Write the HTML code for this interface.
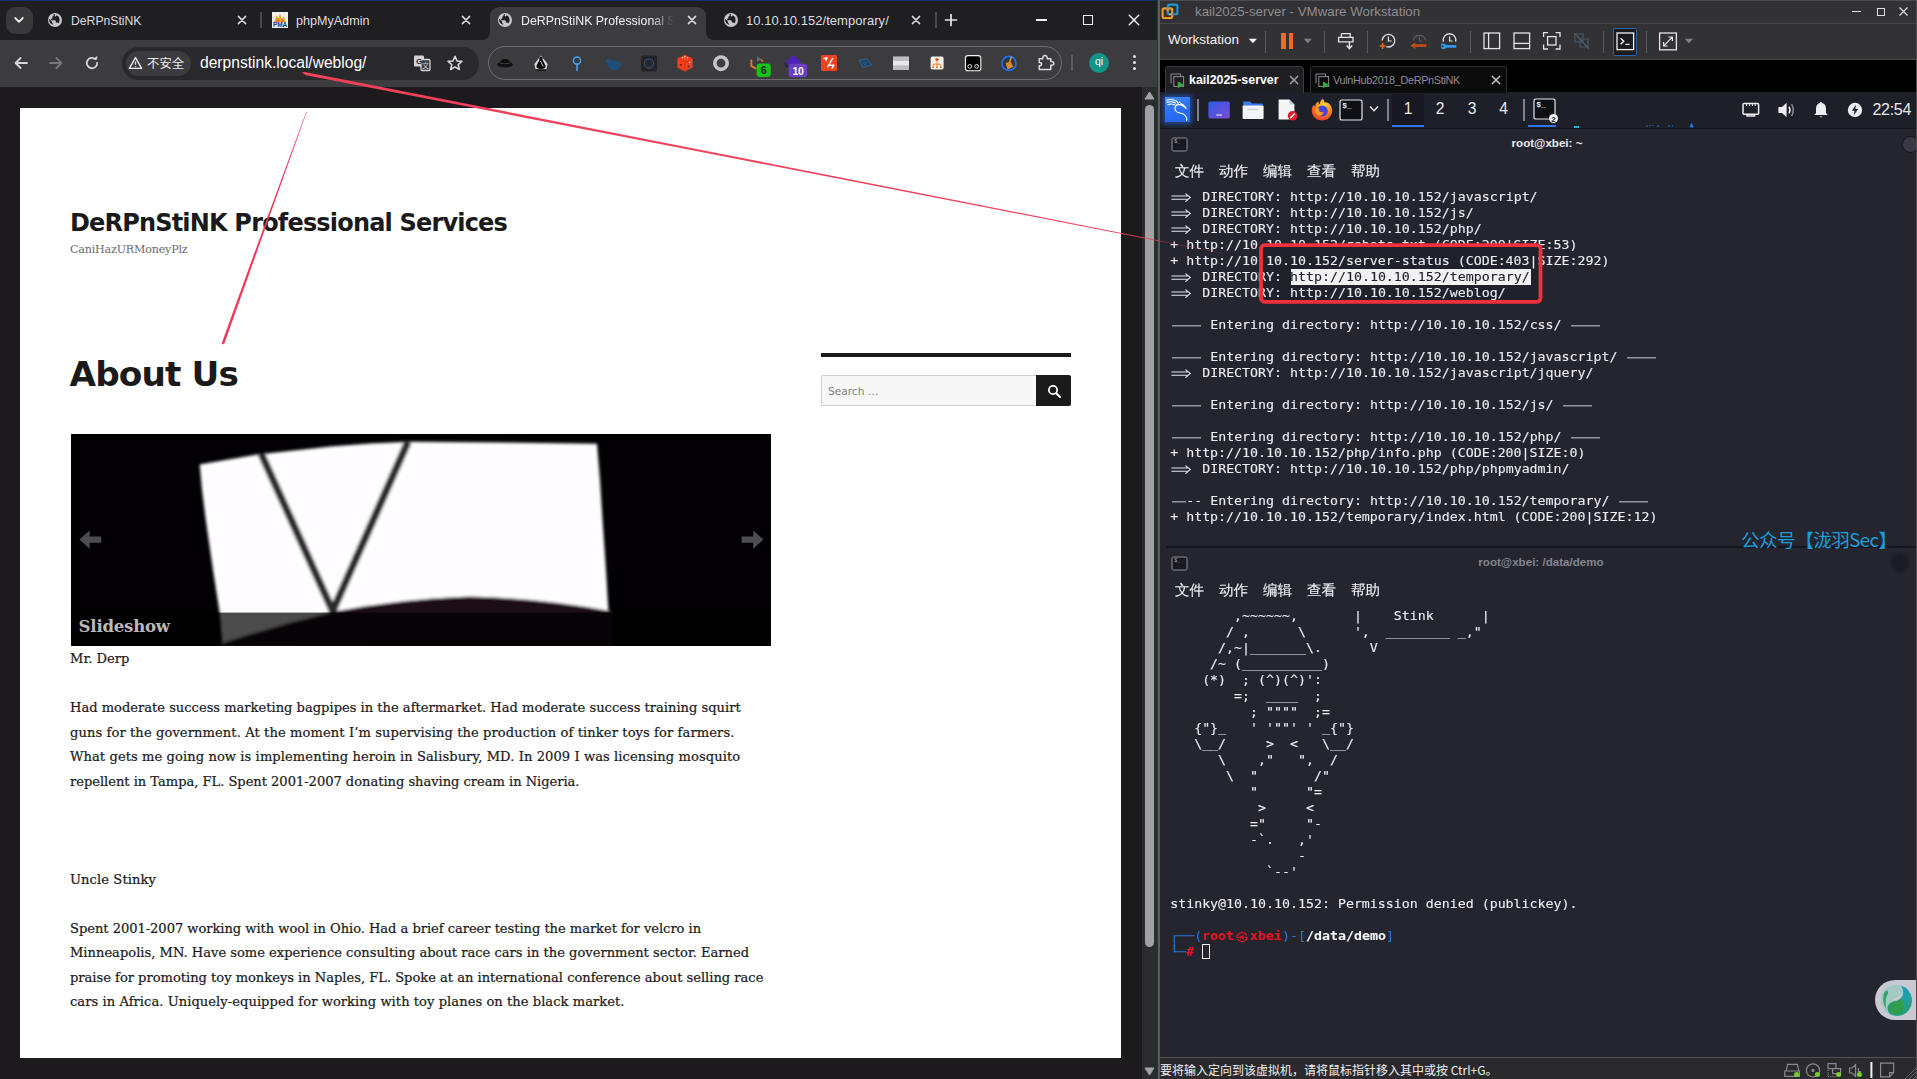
<!DOCTYPE html>
<html lang="zh">
<head>
<meta charset="utf-8">
<title>DeRPnStiNK Professional Services</title>
<style>
*{box-sizing:border-box;margin:0;padding:0}
html,body{width:1917px;height:1079px;overflow:hidden;background:#1c1a1d}
body{position:relative;font-family:"Liberation Sans","Noto Sans CJK SC",sans-serif;color:#e3e3e3}
.abs{position:absolute}
.nw{white-space:nowrap}
/* ---------- chrome ---------- */
#chrome{position:absolute;left:0;top:0;width:1158px;height:1079px;background:#1c1a1d;overflow:hidden}
#tabstrip{position:absolute;left:0;top:0;width:1158px;height:41px;background:#1f1e21;border-top:1px solid #12306b}
#toolbar{position:absolute;left:0;top:40px;width:1158px;height:47px;background:#3c3b3e}
.tabtxt{position:absolute;top:14px;font-size:12px;line-height:15px;color:#dedde0;white-space:nowrap}
.tabx{position:absolute;top:14px;width:12px;height:12px}
#omni{position:absolute;left:122px;top:47px;width:357px;height:33px;border-radius:17px;background:#29282b}
#chip{position:absolute;left:126px;top:51px;width:65px;height:25px;border-radius:13px;background:#3c3b3e}
#extpill{position:absolute;left:488px;top:46px;width:574px;height:34px;border-radius:17px;border:1px solid #6e6d70;background:#3c3b3e}
/* ---------- web page ---------- */
#page{position:absolute;left:20px;top:108px;width:1101px;height:950px;background:#fff;color:#1a1a1a}
.mont{font-family:"DejaVu Sans","Liberation Sans",sans-serif;font-weight:bold;color:#1a1a1a;white-space:nowrap}
.merri{font-family:"DejaVu Serif","Liberation Serif",serif;color:#1a1a1a;white-space:nowrap}
.bl{position:absolute;left:50px;font-size:13.05px;line-height:16px;height:16px;-webkit-text-stroke:0.22px #1a1a1a}
/* ---------- vmware ---------- */
#vm{position:absolute;left:1158px;top:0;width:759px;height:1079px;background:#252530;overflow:hidden}
.mono{font-family:"DejaVu Sans Mono","Liberation Mono",monospace;font-size:13.288px;line-height:16px;white-space:pre;color:#ededf1;-webkit-text-stroke:0.12px currentColor}
.tl{position:absolute;left:12.2px;height:16px;transform:scaleY(0.885);transform-origin:0 11.7px}
.menu{position:absolute;font-family:"WenQuanYi Zen Hei","Noto Sans CJK SC",sans-serif;font-size:14.5px;line-height:20px;color:#f0f0f4;white-space:nowrap;-webkit-text-stroke:0.12px #f0f0f4;margin-top:0.8px}
.lig{display:inline-block;vertical-align:top}
.dash4{display:inline-block;width:32px;height:16px;vertical-align:top;background:linear-gradient(#e6e6ea,#e6e6ea) 1.5px 7.6px/29px 1.2px no-repeat}
.dash1{display:inline-block;width:8px;height:16px;vertical-align:top;background:linear-gradient(#e6e6ea,#e6e6ea) 1.5px 7.6px/6.5px 1.2px no-repeat}
.dash2{display:inline-block;width:16px;height:16px;vertical-align:top;background:linear-gradient(#e6e6ea,#e6e6ea) 1.5px 7.6px/14.5px 1.2px no-repeat}
.sel{color:#1d1e27}
.kk{display:inline-block;width:16px;text-align:center;font-family:"Noto Sans CJK SC",sans-serif;font-weight:bold;font-size:12px;line-height:16px;vertical-align:top}
</style>
</head>
<body>
<!-- ================= CHROME WINDOW ================= -->
<div id="chrome">
 <div id="tabstrip"></div>
 <div id="toolbar"></div>
 <!-- tab search -->
 <div class="abs" style="left:6px;top:7px;width:27px;height:27px;border-radius:9px;background:#39383b"></div>
 <svg class="abs" style="left:13px;top:15px" width="12" height="10" viewBox="0 0 12 10"><path d="M2.2 3 L6 6.8 L9.8 3" fill="none" stroke="#f1f1f3" stroke-width="1.8" stroke-linecap="round" stroke-linejoin="round"/></svg>
 <!-- active tab -->
 <div class="abs" style="left:490px;top:7px;width:216px;height:34px;border-radius:9px 9px 0 0;background:#3c3b3e"></div>
 <svg class="abs" style="left:482px;top:32px" width="8" height="8"><path d="M8 0 V8 H0 A8 8 0 0 0 8 0Z" fill="#3c3b3e"/></svg>
 <svg class="abs" style="left:706px;top:32px" width="8" height="8"><path d="M0 0 V8 H8 A8 8 0 0 1 0 0Z" fill="#3c3b3e"/></svg>
 <!-- globes -->
 <svg class="abs globe" style="left:47px;top:12px" width="16" height="16" viewBox="0 0 16 16"><circle cx="8" cy="8" r="7" fill="#c9c8cc"/><path d="M6.6 2.2 L6.6 3.6 Q6.6 4.6 5.4 4.6 L5.4 6 Q5.4 6.8 4.2 6.8 L4.2 8.2 L7.6 8.2 Q8.8 8.2 8.8 9.4 L8.8 10.4 L10 10.4 Q11 10.4 11.3 11.6 Q12.6 10.2 12.6 8 Q12.6 4.6 9.6 3.3 Q9.4 4.4 8.4 4.4 L7.8 4.4 L7.8 2.1 Z M2.4 6.8 Q2.2 7.4 2.2 8 Q2.2 11.6 6.2 12.7 L6.2 11.6 Q5 11.6 5 10.4 L5 9.6 Z" fill="#1f1e21"/></svg>
 <svg class="abs globe" style="left:497px;top:12px" width="16" height="16" viewBox="0 0 16 16"><circle cx="8" cy="8" r="7" fill="#c9c8cc"/><path d="M6.6 2.2 L6.6 3.6 Q6.6 4.6 5.4 4.6 L5.4 6 Q5.4 6.8 4.2 6.8 L4.2 8.2 L7.6 8.2 Q8.8 8.2 8.8 9.4 L8.8 10.4 L10 10.4 Q11 10.4 11.3 11.6 Q12.6 10.2 12.6 8 Q12.6 4.6 9.6 3.3 Q9.4 4.4 8.4 4.4 L7.8 4.4 L7.8 2.1 Z M2.4 6.8 Q2.2 7.4 2.2 8 Q2.2 11.6 6.2 12.7 L6.2 11.6 Q5 11.6 5 10.4 L5 9.6 Z" fill="#1f1e21"/></svg>
 <svg class="abs globe" style="left:723px;top:12px" width="16" height="16" viewBox="0 0 16 16"><circle cx="8" cy="8" r="7" fill="#c9c8cc"/><path d="M6.6 2.2 L6.6 3.6 Q6.6 4.6 5.4 4.6 L5.4 6 Q5.4 6.8 4.2 6.8 L4.2 8.2 L7.6 8.2 Q8.8 8.2 8.8 9.4 L8.8 10.4 L10 10.4 Q11 10.4 11.3 11.6 Q12.6 10.2 12.6 8 Q12.6 4.6 9.6 3.3 Q9.4 4.4 8.4 4.4 L7.8 4.4 L7.8 2.1 Z M2.4 6.8 Q2.2 7.4 2.2 8 Q2.2 11.6 6.2 12.7 L6.2 11.6 Q5 11.6 5 10.4 L5 9.6 Z" fill="#1f1e21"/></svg>
 <!-- tab texts -->
 <div class="tabtxt" style="left:71px;font-size:12.2px">DeRPnStiNK</div>
 <div class="tabtxt" style="left:296px;font-size:12.6px">phpMyAdmin</div>
 <div class="tabtxt" style="left:521px;width:153px;overflow:hidden;color:#f0f0f2;font-size:12.37px;-webkit-mask-image:linear-gradient(90deg,#000 85%,transparent 100%);mask-image:linear-gradient(90deg,#000 85%,transparent 100%)">DeRPnStiNK Professional Services</div>
 <div class="tabtxt" style="left:746px;top:13.4px;font-size:13px;letter-spacing:0.05px">10.10.10.152/temporary/</div>
 <!-- PMA icon -->
 <div class="abs" style="left:272px;top:12px;width:16px;height:16px;background:#f4f1ea"></div>
 <svg class="abs" style="left:272px;top:12px" width="16" height="16" viewBox="0 0 16 16"><path d="M2 10 L5 3 L6.5 7 L8 1.5 L10 7.5 L11.5 4 L14 10 Z" fill="#f0a22e"/><path d="M4 10 L6 6 L8 10Z M9 10 L10.5 6.5 L12.5 10Z" fill="#d77b12"/></svg>
 <div class="abs nw" style="left:272px;top:21px;width:16px;text-align:center;font-size:6.5px;font-weight:bold;color:#2b2f8c;line-height:7px;letter-spacing:-0.2px">PMA</div>
 <!-- tab close X -->
 <svg class="tabx" style="left:235.7px"><path d="M2.4 2.4 L9.6 9.6 M9.6 2.4 L2.4 9.6" stroke="#dddce0" stroke-width="1.5" stroke-linecap="round"/></svg>
 <svg class="tabx" style="left:460px"><path d="M2.4 2.4 L9.6 9.6 M9.6 2.4 L2.4 9.6" stroke="#dddce0" stroke-width="1.5" stroke-linecap="round"/></svg>
 <svg class="tabx" style="left:685.7px"><path d="M2.4 2.4 L9.6 9.6 M9.6 2.4 L2.4 9.6" stroke="#dddce0" stroke-width="1.5" stroke-linecap="round"/></svg>
 <svg class="tabx" style="left:909.5px"><path d="M2.4 2.4 L9.6 9.6 M9.6 2.4 L2.4 9.6" stroke="#dddce0" stroke-width="1.5" stroke-linecap="round"/></svg>
 <!-- separators -->
 <div class="abs" style="left:260px;top:12px;width:2px;height:16px;background:#4a494c"></div>
 <div class="abs" style="left:935px;top:12px;width:2px;height:16px;background:#4a494c"></div>
 <!-- new tab + -->
 <svg class="abs" style="left:944px;top:13px" width="14" height="14"><path d="M7 1.5 V12.5 M1.5 7 H12.5" stroke="#e6e5e8" stroke-width="1.7" stroke-linecap="round"/></svg>
 <!-- window controls -->
 <div class="abs" style="left:1036px;top:19px;width:11px;height:1.5px;background:#f0f0f2"></div>
 <div class="abs" style="left:1083px;top:15px;width:10px;height:10px;border:1.5px solid #f0f0f2"></div>
 <svg class="abs" style="left:1128px;top:14px" width="12" height="12"><path d="M0.8 0.8 L11.2 11.2 M11.2 0.8 L0.8 11.2" stroke="#f0f0f2" stroke-width="1.5"/></svg>
 <!-- nav buttons -->
 <svg class="abs" style="left:13px;top:55px" width="16" height="16" viewBox="0 0 16 16"><path d="M14 8 H3 M7.6 3 L2.6 8 L7.6 13" fill="none" stroke="#d6d5d9" stroke-width="1.8" stroke-linecap="round" stroke-linejoin="round"/></svg>
 <svg class="abs" style="left:48px;top:55px" width="16" height="16" viewBox="0 0 16 16"><path d="M2 8 H13 M8.4 3 L13.4 8 L8.4 13" fill="none" stroke="#77767a" stroke-width="1.8" stroke-linecap="round" stroke-linejoin="round"/></svg>
 <svg class="abs" style="left:84px;top:55px" width="16" height="16" viewBox="0 0 16 16"><path d="M13.2 8 A5.2 5.2 0 1 1 11.4 4.1" fill="none" stroke="#d6d5d9" stroke-width="1.8" stroke-linecap="round"/><path d="M9 4.6 H13.2 V0.8 Z" fill="#d6d5d9"/></svg>
 <!-- omnibox -->
 <div id="omni"></div>
 <div id="chip"></div>
 <svg class="abs" style="left:128px;top:56px" width="15" height="14" viewBox="0 0 15 14"><path d="M7.5 1.6 L13.6 12.4 H1.4 Z" fill="none" stroke="#e6e5e8" stroke-width="1.4" stroke-linejoin="round"/><path d="M7.5 5.4 V8.8 M7.5 10.2 V11.2" stroke="#e6e5e8" stroke-width="1.3"/></svg>
 <div class="abs nw" style="left:147px;top:54px;font-size:12.4px;line-height:18px;color:#ececef;font-family:'Noto Sans CJK SC','Liberation Sans',sans-serif">不安全</div>
 <div class="abs nw" id="url" style="left:200px;top:53px;font-size:15.6px;line-height:20px;color:#fff">derpnstink.local/weblog/</div>
 <!-- translate icon -->
 <svg class="abs" style="left:413px;top:54px" width="18" height="18" viewBox="0 0 18 18"><rect x="1" y="1.5" width="10" height="11" rx="1.2" fill="#d2d1d5"/><rect x="8" y="5.5" width="9" height="11" rx="1.2" fill="#3c3b3e" stroke="#d2d1d5" stroke-width="1.3"/><text x="6" y="10" font-size="8" font-weight="bold" fill="#29282b" text-anchor="middle" font-family="Liberation Sans, sans-serif">G</text><text x="12.5" y="14.2" font-size="7" fill="#d2d1d5" text-anchor="middle" font-family="Noto Sans CJK SC, sans-serif">文</text></svg>
 <!-- star -->
 <svg class="abs" style="left:446px;top:54px" width="18" height="18" viewBox="0 0 18 18"><path d="M9 2.2 L11 6.9 L16 7.3 L12.2 10.6 L13.4 15.5 L9 12.9 L4.6 15.5 L5.8 10.6 L2 7.3 L7 6.9 Z" fill="none" stroke="#dcdbdf" stroke-width="1.5" stroke-linejoin="round"/></svg>
 <!-- extensions pill -->
 <div id="extpill"></div>
 <svg class="abs" style="left:488px;top:44px" width="580" height="40" viewBox="488 44 580 40">
  <!-- hat -->
  <ellipse cx="505" cy="64.5" rx="7.6" ry="2.6" fill="#111" stroke="#0a0a0a" stroke-width="0.6"/><path d="M499.6 63.8 Q500.6 58.6 505 59 Q509.6 58.6 510.4 63.8 Q505 65.6 499.6 63.8Z" fill="#0d0d0d"/><path d="M499.8 63 Q505 64.6 510.2 63" stroke="#555" stroke-width="0.7" fill="none"/>
  <!-- chess/flask -->
  <path d="M541 55.5 L547.6 64 L546.4 69.6 H535.6 L534.4 64 Z" fill="#d8d8da"/><path d="M541 56.4 Q543.4 57.4 542.4 59.6 L545.6 66 Q546 69 541 69 Q536 69 536.4 66 L539.6 59.6 Q538.6 57.4 541 56.4Z" fill="#0b0b0c"/><path d="M540.4 61 L543.2 66.4" stroke="#d8d8da" stroke-width="0.9"/><rect x="535.6" y="69.4" width="10.8" height="1.3" fill="#0b0b0c"/>
  <!-- blue pin -->
  <circle cx="577" cy="60.6" r="3.6" fill="none" stroke="#4aa3f0" stroke-width="1.5"/><path d="M577 64.2 V70.4" stroke="#4aa3f0" stroke-width="1.5" stroke-linecap="round"/>
  <!-- blue blob -->
  <path d="M605.6 60.4 Q606.6 57.6 609.6 59.2 L611.4 60.6 Q617.4 59.4 620.4 62.6 Q621.8 66 618.4 69.2 Q614 71 610.4 69 Q607.6 67.2 608 63.6 Q605.2 62.6 605.6 60.4Z" fill="#1f4f78"/>
  <!-- dark square -->
  <rect x="641" y="55.4" width="16" height="16" rx="1.5" fill="#232225"/><circle cx="649" cy="63.4" r="4.6" fill="none" stroke="#33506b" stroke-width="1.3"/><circle cx="649" cy="63.4" r="2.6" fill="none" stroke="#2a3a4a" stroke-width="0.8"/>
  <!-- red dice -->
  <path d="M685 54.8 L692.6 58.4 V67.6 L685 71.4 L677.4 67.6 V58.4 Z" fill="#f4411f"/><path d="M677.4 58.4 L685 62 L692.6 58.4 M685 62 V71.4" stroke="#c9300f" stroke-width="0.7" fill="none"/><circle cx="681" cy="65" r="1" fill="#7a1a06"/><circle cx="688.6" cy="66.6" r="1" fill="#3a2a55"/><circle cx="682.6" cy="57.8" r="0.7" fill="#ffd9cf"/><circle cx="685" cy="56.8" r="0.7" fill="#ffd9cf"/><circle cx="687.4" cy="57.8" r="0.7" fill="#ffd9cf"/><circle cx="689.6" cy="62.4" r="0.8" fill="#ffd9cf"/>
  <!-- grey ring -->
  <circle cx="721" cy="63.2" r="6.2" fill="none" stroke="#c4c3c6" stroke-width="3.6"/>
  <!-- orange + badge 6 -->
  <path d="M751.4 60.4 V66 L755.6 68.6" fill="none" stroke="#f07a1c" stroke-width="1.8" stroke-linecap="round" stroke-linejoin="round"/><path d="M757 56.2 L761.6 59.6 L757 61.4Z" fill="#6b6a6d"/><path d="M761.2 59.6 L763 61.4" stroke="#f07a1c" stroke-width="1.4"/>
  <rect x="756.6" y="63.4" width="14.2" height="13.6" rx="3.2" fill="#14c414"/><text x="763.7" y="74.4" font-size="10.5" font-weight="bold" fill="#0a1a0a" text-anchor="middle" font-family="Liberation Sans, sans-serif">6</text>
  <!-- purple hat + badge 10 -->
  <path d="M785.4 62 L793.4 55.2 L801.4 62 L797.8 64.2 H789 Z" fill="#4d22b8"/><path d="M785.4 63.2 L786.6 66.8 L789 66" stroke="#26126b" stroke-width="1.2" fill="none"/>
  <rect x="788.6" y="63.8" width="18.6" height="13.4" rx="3.2" fill="#6a3fc2"/><text x="797.9" y="74.6" font-size="10.5" font-weight="bold" fill="#fff" text-anchor="middle" font-family="Liberation Sans, sans-serif" letter-spacing="-0.4">10</text>
  <!-- red square -->
  <rect x="821" y="55" width="16" height="16" rx="1.6" fill="#f4411f"/><path d="M824 58.6 L827 57.6 L826 60.6 M832.6 58.4 L827.6 67 M829.8 65.2 L834 65.2 L832 68" stroke="#fff" stroke-width="1.4" fill="none" stroke-linecap="round" stroke-linejoin="round"/>
  <!-- blue diamond -->
  <path d="M858.8 60.6 L866.6 58.8 L871.8 64.6 L863.2 67.6 Z" fill="#1f4564" stroke="#2f6a98" stroke-width="0.9"/><circle cx="865" cy="63.2" r="1.4" fill="none" stroke="#2f6a98" stroke-width="0.6"/>
  <!-- grey bars -->
  <rect x="893" y="56.4" width="16" height="13.6" fill="#bdbcbf"/><rect x="893" y="61" width="16" height="4.4" fill="#e9e9eb"/>
  <!-- white square orange -->
  <rect x="930.6" y="56.6" width="13" height="13" rx="1.8" fill="#f7f3ee"/><circle cx="937" cy="59.6" r="1.7" fill="#f0532a"/><path d="M937 61.4 V64 M933.2 66.6 V64.2 H940.8 V66.6 M937 64.2 V66.6" stroke="#f07a1c" stroke-width="0.9" fill="none"/><circle cx="933.2" cy="67.2" r="1" fill="#f07a1c"/><circle cx="937" cy="67.2" r="1" fill="#f07a1c"/><circle cx="940.8" cy="67.2" r="1" fill="#f07a1c"/>
  <!-- black square eyes -->
  <rect x="965.4" y="55.6" width="15.4" height="15.2" rx="2.6" fill="#000" stroke="#f4f4f6" stroke-width="1.1"/><circle cx="969.8" cy="66.4" r="1.9" fill="none" stroke="#f4f4f6" stroke-width="0.9"/><circle cx="976.6" cy="66.4" r="1.9" fill="none" stroke="#f4f4f6" stroke-width="0.9"/>
  <!-- blue ring broom -->
  <circle cx="1009" cy="63.4" r="7" fill="#3a342e" stroke="#1c70ee" stroke-width="1.7"/><path d="M1011.6 56.6 L1009.6 62" stroke="#e39a4c" stroke-width="1.3"/><path d="M1005.6 63 L1010.6 61.4 L1013.4 66.8 L1007.6 69.4 Z" fill="#d8873a"/>
  <!-- puzzle -->
  <path d="M1039.2 58.8 H1042.8 Q1042.6 55.6 1045 55.6 Q1047.4 55.6 1047.2 58.8 H1050.8 V61.6 Q1053.8 61.2 1053.8 63.4 Q1053.8 65.6 1050.8 65.2 V69.4 H1039.2 V65.8 Q1041.6 65.8 1041.6 64 Q1041.6 62.4 1039.2 62.4 Z" fill="none" stroke="#dcdbdf" stroke-width="1.5" stroke-linejoin="round"/>
 </svg>
 <div class="abs" style="left:1071px;top:55px;width:2px;height:16px;background:#5b5a5d"></div>
 <div class="abs" style="left:1089px;top:53px;width:20px;height:20px;border-radius:10px;background:#12948a"></div>
 <div class="abs nw" style="left:1089px;top:55px;width:20px;text-align:center;font-size:10.5px;line-height:13px;color:#fff">qi</div>
 <div class="abs" style="left:1132.5px;top:55px;width:3px;height:3px;border-radius:2px;background:#e6e5e8;box-shadow:0 6px 0 #e6e5e8,0 12px 0 #e6e5e8"></div>
 <!-- scrollbar -->
 <div class="abs" style="left:1142px;top:87px;width:15px;height:992px;background:#2c2b2e"></div>
 <div class="abs" style="left:1145px;top:105px;width:9px;height:842px;border-radius:5px;background:#a1a0a3"></div>
 <svg class="abs" style="left:1144px;top:91px" width="11" height="9"><path d="M5.5 1 L10 8 H1 Z" fill="#a1a0a3" stroke="#a1a0a3" stroke-width="1" stroke-linejoin="round"/></svg>
 <svg class="abs" style="left:1144px;top:1067px" width="11" height="9"><path d="M5.5 8 L10 1 H1 Z" fill="#a1a0a3" stroke="#a1a0a3" stroke-width="1" stroke-linejoin="round"/></svg>
 <div class="abs" style="left:1157px;top:0;width:1px;height:1079px;background:#16346f"></div>
 <!--CHROME_UI_END-->
 <div id="page">
  <div class="abs mont" id="sitetitle" style="left:50px;top:99.5px;font-size:24px;line-height:30px;letter-spacing:-0.82px">DeRPnStiNK Professional Services</div>
  <div class="abs merri" id="tagline" style="left:50px;top:134.6px;font-size:11.1px;letter-spacing:-0.18px;line-height:14px;color:#686868">CaniHazURMoneyPlz</div>
  <div class="abs mont" id="abouth" style="left:49.5px;top:245px;font-size:34.3px;line-height:42px;letter-spacing:-0.9px">About Us</div>
  <!-- slideshow -->
  <div class="abs" style="left:50.6px;top:326px;width:700px;height:212px;background:#020002;overflow:hidden">
   <svg class="abs" style="left:0;top:0" width="700" height="212" viewBox="70 434 700 212">
    <defs><filter id="bl" x="-5%" y="-5%" width="110%" height="110%"><feGaussianBlur stdDeviation="1.7"/></filter></defs>
    <g filter="url(#bl)">
     <path d="M198.7 464.5 L256.3 454.5 L330 446.5 L369.4 443.6 L409 441.8 L500 442.6 L596 443.8 L599 480 L601.5 519.2 L605 570 L607.5 612 L607.5 650 L222 650 L218.6 612.5 L212 570 L204.7 519.2 L201 490 Z" fill="#fffdff"/>
     <path d="M260.2 453.7 L331.7 611 L407 441.8" fill="none" stroke="#2b2a2c" stroke-width="7.6" stroke-linejoin="miter"/>
     <path d="M206 648 Q270 626 333 611.5 Q400 598.5 468 596.4 Q540 598 612 611.5 L612 650 Z" fill="#1c0f12"/>
    </g>
    <rect x="70" y="612.6" width="700" height="34" fill="#000" fill-opacity="0.7"/>
    <path d="M78.4 539.6 L88.6 530.4 V536.4 H100.2 V542.8 H88.6 V548.8 Z" fill="#4e4d4f"/>
    <path d="M762.4 539.6 L752.2 530.4 V536.4 H740.6 V542.8 H752.2 V548.8 Z" fill="#4e4d4f"/>
   </svg>
   <div class="abs nw" style="left:8px;top:182px;font-family:'DejaVu Serif','Liberation Serif',serif;font-weight:bold;font-size:16.6px;line-height:20px;color:#b9b9b9;letter-spacing:-0.25px">Slideshow</div>
  </div>
  <!-- body text -->
  <div class="bl merri" style="top:543.4px;letter-spacing:0.033px">Mr. Derp</div>
  <div class="bl merri" style="top:592.4px;letter-spacing:0.007px">Had moderate success marketing bagpipes in the aftermarket. Had moderate success training squirt</div>
  <div class="bl merri" style="top:616.9px;letter-spacing:0.106px">guns for the government. At the moment I’m supervising the production of tinker toys for farmers.</div>
  <div class="bl merri" style="top:641.4px;letter-spacing:0.091px">What gets me going now is implementing heroin in Salisbury, MD. In 2009 I was licensing mosquito</div>
  <div class="bl merri" style="top:665.9px;letter-spacing:-0.02px">repellent in Tampa, FL. Spent 2001-2007 donating shaving cream in Nigeria.</div>
  <div class="bl merri" style="top:763.9px;letter-spacing:0.102px">Uncle Stinky</div>
  <div class="bl merri" style="top:812.9px;letter-spacing:-0.029px">Spent 2001-2007 working with wool in Ohio. Had a brief career testing the market for velcro in</div>
  <div class="bl merri" style="top:837.4px;letter-spacing:0.012px">Minneapolis, MN. Have some experience consulting about race cars in the government sector. Earned</div>
  <div class="bl merri" style="top:861.9px;letter-spacing:-0.005px">praise for promoting toy monkeys in Naples, FL. Spoke at an international conference about selling race</div>
  <div class="bl merri" style="top:886.4px;letter-spacing:0.061px">cars in Africa. Uniquely-equipped for working with toy planes on the black market.</div>
  <!-- sidebar -->
  <div class="abs" style="left:801px;top:245px;width:250px;height:4px;background:#1a1a1a"></div>
  <div class="abs" style="left:801px;top:266.5px;width:216px;height:31px;background:#f7f7f7;border:1px solid #d1d1d1;border-right:0;border-radius:2px 0 0 2px"></div>
  <div class="abs nw" style="left:808px;top:276px;font-family:'DejaVu Sans','Liberation Sans',sans-serif;font-size:10.6px;line-height:14px;color:#7d7d7d">Search …</div>
  <div class="abs" style="left:1016px;top:266.5px;width:35px;height:31px;background:#1a1a1a;border-radius:0 2px 2px 0"></div>
  <svg class="abs" style="left:1025.5px;top:274.5px" width="17" height="17" viewBox="0 0 16 16"><circle cx="6.6" cy="6.6" r="3.9" fill="none" stroke="#fff" stroke-width="1.7"/><path d="M9.6 9.6 L13.2 13.2" stroke="#fff" stroke-width="1.9" stroke-linecap="round"/></svg>
 </div>
 <!--PAGE_END-->
</div>
<!-- ================= VMWARE WINDOW ================= -->
<div id="vm">
 <!--VM1-->
 <div class="abs" style="left:0;top:0;width:759px;height:24px;background:#323134;border-top:1px solid #4c4b4f"></div>
 <div class="abs" style="left:0;top:23px;width:759px;height:1px;background:#48474a"></div>
 <div class="abs" style="left:0;top:24px;width:759px;height:36px;background:#323134"></div>
 <div class="abs" style="left:0;top:59px;width:759px;height:1px;background:#4a494c"></div>
 <div class="abs" style="left:0;top:60px;width:759px;height:32px;background:#000"></div>
 <div class="abs" style="left:0;top:92px;width:759px;height:36px;background:#1e2029"></div>
 <svg class="abs" style="left:3px;top:3px" width="18" height="18" viewBox="0 0 18 18"><rect x="1.6" y="5.4" width="9.6" height="9.6" rx="1.8" fill="none" stroke="#f39a1e" stroke-width="2.1"/><rect x="6.8" y="1.6" width="9.6" height="9.6" rx="1.8" fill="none" stroke="#1d97d4" stroke-width="2.1"/><path d="M6.8 5.4 V8.6 M11.2 11.2 H8" stroke="#f39a1e" stroke-width="2.1" fill="none"/></svg>
 <div class="abs nw" style="left:37px;top:3px;font-size:13.3px;line-height:17px;color:#8e8d92">kail2025-server - VMware Workstation</div>
 <div class="abs" style="left:694px;top:11px;width:9px;height:1px;background:#e0e0e3"></div>
 <div class="abs" style="left:719px;top:8px;width:8px;height:8px;border:1.3px solid #e0e0e3"></div>
 <svg class="abs" style="left:741px;top:7px" width="9" height="9"><path d="M0.5 0.5 L8.5 8.5 M8.5 0.5 L0.5 8.5" stroke="#e0e0e3" stroke-width="1.2"/></svg>
 <div class="abs nw" style="left:10px;top:31px;font-size:13.5px;line-height:17px;color:#f2f2f4">Workstation</div>
 <svg class="abs" style="left:90px;top:38px" width="10" height="6"><path d="M0.8 0.8 H9 L4.9 5.2Z" fill="#f2f2f4"/></svg>
 <div class="abs" style="left:107px;top:31px;width:1px;height:22px;background:#58575a"></div>
 <div class="abs" style="left:123px;top:33px;width:4.6px;height:16px;background:#f26a1b"></div>
 <div class="abs" style="left:130.5999999999999px;top:33px;width:4.6px;height:16px;background:#f26a1b"></div>
 <svg class="abs" style="left:145px;top:38px" width="10" height="6"><path d="M0.8 0.8 H9 L4.9 5.2Z" fill="#808084"/></svg>
 <div class="abs" style="left:166px;top:31px;width:1px;height:22px;background:#58575a"></div>
 <svg class="abs" style="left:178px;top:31px" width="20" height="20" viewBox="0 0 20 20"><path d="M5.4 2.6 H14.2 V6.4 M5.4 2.6 V6.4 M2.6 6.4 H17 V10.8 H2.6 Z" fill="none" stroke="#e4e4e7" stroke-width="1.3"/><path d="M13.4 10.8 V17 M10.6 14.6 L13.4 17.6 L16.2 14.6" fill="none" stroke="#e4e4e7" stroke-width="1.4"/></svg>
 <div class="abs" style="left:209px;top:31px;width:1px;height:22px;background:#58575a"></div>
 <svg class="abs" style="left:220px;top:31px" width="20" height="20" viewBox="0 0 20 20"><path d="M4.2 9.6 A6.3 6.3 0 1 1 8.4 15.6" fill="none" stroke="#e4e4e7" stroke-width="1.3"/><path d="M10.4 5.6 V10 H13.6" fill="none" stroke="#e4e4e7" stroke-width="1.2"/><path d="M4.6 12 V18 M1.6 15 H7.6" stroke="#f26a1b" stroke-width="1.5"/></svg>
 <svg class="abs" style="left:251px;top:31px" width="20" height="20" viewBox="0 0 20 20"><path d="M4.2 9.6 A6.3 6.3 0 0 1 16.6 9.6" fill="none" stroke="#5e5d61" stroke-width="1.2"/><path d="M10.4 5.6 V10 H13.2" fill="none" stroke="#5e5d61" stroke-width="1.1"/><path d="M6 14.6 H17.4" stroke="#c24a18" stroke-width="2.6"/><path d="M1.4 14.6 L6.4 11.2 V18Z" fill="#c24a18"/></svg>
 <svg class="abs" style="left:281px;top:31px" width="20" height="20" viewBox="0 0 20 20"><path d="M4.4 10.6 A6.3 6.3 0 1 1 16.6 10.6" fill="none" stroke="#e4e4e7" stroke-width="1.3"/><path d="M10.6 5.6 V10 H13.6" fill="none" stroke="#e4e4e7" stroke-width="1.2"/><path d="M6.4 15.4 H17.4" stroke="#2e9af0" stroke-width="2.6"/><path d="M2 12.6 Q2 17.6 6.4 17.4 L6.4 13.4 Q4 14.4 3.6 12.6Z" fill="#2e9af0"/><circle cx="4.6" cy="15.4" r="2.6" fill="#2e9af0"/><circle cx="3.6" cy="15.2" r="1" fill="#323134"/></svg>
 <div class="abs" style="left:312px;top:31px;width:1px;height:22px;background:#58575a"></div>
 <svg class="abs" style="left:324px;top:31px" width="20" height="20" viewBox="0 0 20 20"><rect x="2" y="2" width="15.6" height="15.6" fill="none" stroke="#e4e4e7" stroke-width="1.3"/><path d="M6.6 2 V17.6" stroke="#e4e4e7" stroke-width="1.3"/></svg>
 <svg class="abs" style="left:354px;top:31px" width="20" height="20" viewBox="0 0 20 20"><rect x="2" y="2" width="15.6" height="15.6" fill="none" stroke="#e4e4e7" stroke-width="1.3"/><path d="M2 12.4 H17.6" stroke="#e4e4e7" stroke-width="1.3"/></svg>
 <svg class="abs" style="left:384px;top:31px" width="20" height="20" viewBox="0 0 20 20"><path d="M1.6 6 V1.6 H6 M13.6 1.6 H18 V6 M18 13.6 V18 H13.6 M6 18 H1.6 V13.6" fill="none" stroke="#e4e4e7" stroke-width="1.3"/><rect x="5.6" y="5.6" width="8.4" height="8.4" fill="none" stroke="#e4e4e7" stroke-width="1.3"/></svg>
 <svg class="abs" style="left:414px;top:31px" width="20" height="20" viewBox="0 0 20 20"><path d="M3 3 H11 V11 H3Z M8 8 H16 V16 H8Z" fill="none" stroke="#3d5a6e" stroke-width="1.2"/><path d="M2.4 2 L17 18" stroke="#5a595d" stroke-width="1.2"/></svg>
 <div class="abs" style="left:445px;top:31px;width:1px;height:22px;background:#58575a"></div>
 <div class="abs" style="left:455px;top:28px;width:24.4px;height:27.6px;background:#1b1b1e;border:1px solid #2f62ad;border-radius:2px"></div>
 <svg class="abs" style="left:457px;top:31px" width="20" height="20" viewBox="0 0 20 20"><rect x="2" y="2" width="16.6" height="16.6" fill="none" stroke="#f0f0f3" stroke-width="1.3"/><path d="M5.6 7.2 L8.8 10.2 L5.6 13.2 M10.4 13.4 H14.6" fill="none" stroke="#f0f0f3" stroke-width="1.4"/></svg>
 <div class="abs" style="left:488px;top:31px;width:1px;height:22px;background:#58575a"></div>
 <svg class="abs" style="left:500px;top:31px" width="20" height="20" viewBox="0 0 20 20"><rect x="1.6" y="2" width="16.8" height="16.8" fill="none" stroke="#e4e4e7" stroke-width="1.3"/><path d="M6 14.6 L14 6.4 M10.4 6 H14.4 V10 M9.6 15 H5.6 V11" fill="none" stroke="#e4e4e7" stroke-width="1.2"/></svg>
 <svg class="abs" style="left:526px;top:38px" width="10" height="6"><path d="M0.8 0.8 H9 L4.9 5.2Z" fill="#808084"/></svg>
 <div class="abs" style="left:7px;top:66px;width:139px;height:27px;background:#1f1f23;border:1px solid #3b3a3e;border-bottom:0;border-radius:4px 4px 0 0"></div>
 <div class="abs" style="left:151.5px;top:66px;width:197px;height:27px;background:#0b0b0c;border:1px solid #2e2d30;border-bottom:0;border-radius:4px 4px 0 0"></div>
 <svg class="abs" style="left:11.5px;top:72.8px" width="17" height="16" viewBox="0 0 17 16"><path d="M1 10.4 V1 H10.6 V3.2" fill="none" stroke="#8d8c91" stroke-width="1"/><rect x="3.8" y="3.6" width="9.8" height="9.8" fill="none" stroke="#8d8c91" stroke-width="1"/><path d="M7.8 8.4 L14.4 11.8 L7.8 15.2Z" fill="#2fae3f"/></svg>
 <svg class="abs" style="left:156.5px;top:72.8px" width="17" height="16" viewBox="0 0 17 16"><path d="M1 10.4 V1 H10.6 V3.2" fill="none" stroke="#8d8c91" stroke-width="1"/><rect x="3.8" y="3.6" width="9.8" height="9.8" fill="none" stroke="#8d8c91" stroke-width="1"/><path d="M7.8 8.4 L14.4 11.8 L7.8 15.2Z" fill="#2fae3f"/></svg>
 <div class="abs nw" style="left:31px;top:72px;font-size:12.4px;font-weight:bold;line-height:16px;color:#fff">kail2025-server</div>
 <div class="abs nw" style="left:175px;top:73px;font-size:10.9px;line-height:15px;color:#8d8c91;letter-spacing:-0.35px">VulnHub2018_DeRPnStiNK</div>
 <svg class="abs" style="left:130.5px;top:75px" width="10" height="10"><path d="M1 1 L9 9 M9 1 L1 9" stroke="#a5a4a9" stroke-width="1.5"/></svg>
 <svg class="abs" style="left:332.5px;top:75px" width="10" height="10"><path d="M1 1 L9 9 M9 1 L1 9" stroke="#c9c8cd" stroke-width="1.5"/></svg>
 <!--VM1_END-->
 <!--VM2-->
 <div class="abs" style="left:7px;top:97px;width:25px;height:25px;background:linear-gradient(160deg,#3f8bf0 0%,#2a6df4 55%,#2563f0 100%);box-shadow:0 0 5px 2px rgba(42,108,245,0.55)"></div>
 <svg class="abs" style="left:7px;top:96px" width="28" height="28" viewBox="0 0 28 28"><path d="M1.6 4.2 Q7 2.4 11.6 5.2 Q13.6 6.6 13.2 8.4 M2 6.4 Q6.6 4.8 10.4 7 M3 8.6 Q6.4 7.4 9.6 8.8 M13.2 8.4 Q9.6 9.6 10 13 Q10.6 16.4 15 17 Q19.6 17.6 21.4 21.4 Q22 23 21.6 24.6 M13.2 8.4 Q17 8.6 19.6 11 Q20.8 12 21.4 12.6 Q20 10 17.6 8.4 Q15.6 7.2 14.6 6" fill="none" stroke="#fff" stroke-width="1.15" stroke-linecap="round"/></svg>
 <div class="abs" style="left:39px;top:99px;width:2px;height:22px;background:#7f818c"></div>
 <svg class="abs" style="left:49px;top:99px" width="24" height="22" viewBox="0 0 24 22"><defs><linearGradient id="pg" x1="0" y1="0" x2="1" y2="1"><stop offset="0" stop-color="#2f5be6"/><stop offset="1" stop-color="#7b4bd0"/></linearGradient></defs><rect x="1.4" y="2.6" width="21.4" height="16.8" rx="1.6" fill="url(#pg)"/><rect x="9.4" y="15.4" width="5.6" height="1.2" fill="#dfe3ff"/></svg>
 <svg class="abs" style="left:83px;top:99px" width="24" height="22" viewBox="0 0 24 22"><path d="M2.2 2.6 H9 L11 4.6 H21.6 V8 H2.2Z" fill="#3a7bf0"/><rect x="1.6" y="6.4" width="21" height="13.6" rx="1" fill="#f4f5f8"/><rect x="6.4" y="9.4" width="11.4" height="1.8" rx="0.9" fill="#d3d5dc"/></svg>
 <svg class="abs" style="left:118px;top:98px" width="24" height="24" viewBox="0 0 24 24"><path d="M2.6 1.6 H13.4 L18.4 6.6 V21.4 H2.6Z" fill="#f5f5f7"/><path d="M13.4 1.6 V6.6 H18.4Z" fill="#c9cad1"/><circle cx="16.6" cy="17.8" r="4.8" fill="#e81b2d"/><path d="M14.6 19.8 L18.4 16" stroke="#fff" stroke-width="1.5" stroke-linecap="round"/></svg>
 <svg class="abs" style="left:151px;top:97px" width="26" height="26" viewBox="0 0 26 26"><defs><radialGradient id="fx" cx="0.6" cy="0.25" r="0.9"><stop offset="0" stop-color="#ffd43a"/><stop offset="0.45" stop-color="#ff8a1e"/><stop offset="1" stop-color="#e3202e"/></radialGradient></defs><path d="M13.6 1.6 Q15.4 3.6 15.2 5.6 Q19 4.6 21.4 8 Q24.4 12.6 22.4 17.6 Q19.6 23.4 13 23.6 Q5.6 23.4 3.2 16.8 Q1.8 11.4 5 7.6 Q5.2 9.4 6.2 10 Q6.2 6.6 9.4 4.6 Q9.4 6.6 10.6 7.4 Q11 3.8 13.6 1.6Z" fill="url(#fx)"/><circle cx="13.4" cy="14" r="5.4" fill="#3c49d9"/><path d="M8.4 12 Q11 9.8 14.2 10.8 Q12 11.6 12.2 13.2 Q14.4 13.6 15.8 12.6 Q17.8 15.6 15.6 18 Q12 20.6 8.8 17.6 Q7.4 15 8.4 12Z" fill="#6a3ad8" opacity="0.55"/><path d="M5.6 12.4 Q8 10.4 10.8 11.8 Q9.4 13 10.4 14.6 Q12.4 16 14.8 14.4 Q14 18.6 10 18.6 Q6.2 18 5.6 12.4Z" fill="#ff9a26"/></svg>
 <svg class="abs" style="left:181px;top:99px" width="24" height="22" viewBox="0 0 24 22"><rect x="1" y="1" width="22" height="20" rx="1.6" fill="#0e0f14" stroke="#e6e6ea" stroke-width="1.2"/><text x="3.2" y="9.4" font-size="8" font-weight="bold" fill="#e6e6ea" font-family="Liberation Mono, monospace">$_</text></svg>
 <svg class="abs" style="left:210px;top:105px" width="12" height="8"><path d="M2 1.6 L6 5.8 L10 1.6" fill="none" stroke="#e6e6ea" stroke-width="1.4"/></svg>
 <div class="abs" style="left:229px;top:99px;width:2px;height:22px;background:#7f818c"></div>
 <div class="abs" style="left:234px;top:94px;width:32px;height:33px;background:#171820;border-bottom:2.5px solid #2d73ee"></div>
 <div class="abs nw" style="left:240px;top:99px;width:20px;text-align:center;font-size:15.6px;line-height:20px;color:#e8e8ec">1</div>
 <div class="abs nw" style="left:272px;top:99px;width:20px;text-align:center;font-size:15.6px;line-height:20px;color:#e8e8ec">2</div>
 <div class="abs nw" style="left:304px;top:99px;width:20px;text-align:center;font-size:15.6px;line-height:20px;color:#e8e8ec">3</div>
 <div class="abs nw" style="left:335.5px;top:99px;width:20px;text-align:center;font-size:15.6px;line-height:20px;color:#e8e8ec">4</div>
 <div class="abs" style="left:365px;top:99px;width:2px;height:22px;background:#7f818c"></div>
 <div class="abs" style="left:370px;top:124.5px;width:28px;height:2.5px;background:#2d73ee"></div>
 <svg class="abs" style="left:375px;top:98px" width="23" height="22" viewBox="0 0 23 22"><rect x="1" y="1" width="21" height="20" rx="1.6" fill="#0e0f14" stroke="#e6e6ea" stroke-width="1.2"/><text x="3.2" y="9.4" font-size="8" font-weight="bold" fill="#e6e6ea" font-family="Liberation Mono, monospace">$_</text></svg>
 <div class="abs" style="left:391px;top:114px;width:9px;height:9px;border-radius:5px;background:#f2f2f5"></div>
 <div class="abs nw" style="left:391px;top:114.5px;width:9px;text-align:center;font-size:8px;font-weight:bold;line-height:9px;color:#15161c">2</div>
 <div class="abs" style="left:416px;top:126px;width:5px;height:2px;background:#19b4e6"></div>
 <svg class="abs" style="left:482px;top:122px" width="56" height="6" viewBox="0 0 56 6"><path d="M6 4 h2 M10 4 v-1 M13 4 v-1 M17 4 h2 M28 4 h2 M32 4 h1 M50 5 L51.6 1.4 L53.2 5Z" stroke="#1f6fe0" stroke-width="1" fill="#1f6fe0"/></svg>
 <svg class="abs" style="left:583px;top:101px" width="20" height="18" viewBox="0 0 20 18"><rect x="2" y="2.6" width="15.6" height="10.6" rx="1" fill="none" stroke="#eeeef2" stroke-width="1.5"/><path d="M5.6 2.6 V5 M8.6 2.6 V5 M11.4 2.6 V5 M14.2 2.6 V5" stroke="#eeeef2" stroke-width="1"/><path d="M6 13.2 V15 H13.6 V13.2" fill="none" stroke="#eeeef2" stroke-width="1.4"/></svg>
 <svg class="abs" style="left:618px;top:100px" width="22" height="20" viewBox="0 0 22 20"><path d="M2.4 7 H6 L10.6 2.8 V17.2 L6 13 H2.4Z" fill="#eeeef2"/><path d="M13 6.6 Q15 10 13 13.4" fill="none" stroke="#eeeef2" stroke-width="1.5"/><path d="M15.6 4 Q19 10 15.6 16" fill="none" stroke="#8a8c96" stroke-width="1.5"/></svg>
 <svg class="abs" style="left:654px;top:100px" width="18" height="20" viewBox="0 0 18 20"><path d="M9 2 Q9.9 2 10.1 3 Q14 4.2 14 9 V13 L15.8 15 H2.2 L4 13 V9 Q4 4.2 7.9 3 Q8.1 2 9 2Z" fill="#eeeef2"/><path d="M7.4 16.4 Q9 18.2 10.6 16.4Z" fill="#eeeef2"/></svg>
 <svg class="abs" style="left:688px;top:101px" width="18" height="18" viewBox="0 0 18 18"><circle cx="9" cy="9" r="7.2" fill="#eeeef2"/><path d="M10 3.8 L5.8 9.8 H8.6 L7.8 14.2 L12.2 8 H9.4Z" fill="#1e2029"/></svg>
 <div class="abs nw" style="left:714.5px;top:99.5px;font-size:16px;line-height:20px;color:#e8e8ec;letter-spacing:-0.3px">22:54</div>
 <div class="abs" style="left:0;top:128px;width:759px;height:418px;background:#252530"></div>
 <div class="abs" style="left:0;top:127.5px;width:759px;height:1.5px;background:#14151b"></div>
 <svg class="abs" style="left:12.5px;top:136.6px" width="17" height="15" viewBox="0 0 17 15"><rect x="1" y="1" width="15" height="13" rx="1.6" fill="#181920" stroke="#8f919b" stroke-width="1"/><text x="3.2" y="6.2" font-size="5" font-weight="bold" fill="#8f919b" font-family="Liberation Mono, monospace">$_</text></svg>
 <div class="abs nw" style="left:289px;top:135px;width:200px;text-align:center;font-size:11.6px;font-weight:bold;line-height:16px;color:#ececf0">root@xbei: ~</div>
 <div class="abs" style="left:744px;top:136px;width:17px;height:17px;border-radius:9px;background:#3a3a46;border:1px solid #15151c"></div>
 <div class="menu" style="left:17px;top:160px">文件</div>
 <div class="menu" style="left:61px;top:160px">动作</div>
 <div class="menu" style="left:105px;top:160px">编辑</div>
 <div class="menu" style="left:149px;top:160px">查看</div>
 <div class="menu" style="left:193px;top:160px">帮助</div>
 <div class="tl mono" style="top:189px"><svg class="lig" width="24" height="16" viewBox="0 0 24 16"><path d="M1.4 6.3 H17.6 M1.4 10.1 H17.6 M15.4 3.6 L20.4 8.2 L15.4 12.8" fill="none" stroke="#e6e6ea" stroke-width="1.15"/></svg> DIRECTORY: http://10.10.10.152/javascript/</div>
 <div class="tl mono" style="top:205px"><svg class="lig" width="24" height="16" viewBox="0 0 24 16"><path d="M1.4 6.3 H17.6 M1.4 10.1 H17.6 M15.4 3.6 L20.4 8.2 L15.4 12.8" fill="none" stroke="#e6e6ea" stroke-width="1.15"/></svg> DIRECTORY: http://10.10.10.152/js/</div>
 <div class="tl mono" style="top:221px"><svg class="lig" width="24" height="16" viewBox="0 0 24 16"><path d="M1.4 6.3 H17.6 M1.4 10.1 H17.6 M15.4 3.6 L20.4 8.2 L15.4 12.8" fill="none" stroke="#e6e6ea" stroke-width="1.15"/></svg> DIRECTORY: http://10.10.10.152/php/</div>
 <div class="tl mono" style="top:237px">+ http://10.10.10.152/robots.txt (CODE:200|SIZE:53)</div>
 <div class="abs" style="left:103px;top:245px;width:279px;height:56px;background:#20212b"></div>
 <div class="tl mono" style="top:253px">+ http://10.10.10.152/server-status (CODE:403|SIZE:292)</div>
 <div class="abs" style="left:133px;top:268.5px;width:240px;height:16px;background:#f2f2f5"></div>
 <div class="tl mono" style="top:269px"><svg class="lig" width="24" height="16" viewBox="0 0 24 16"><path d="M1.4 6.3 H17.6 M1.4 10.1 H17.6 M15.4 3.6 L20.4 8.2 L15.4 12.8" fill="none" stroke="#e6e6ea" stroke-width="1.15"/></svg> DIRECTORY: <span class="sel">http://10.10.10.152/temporary/</span></div>
 <div class="tl mono" style="top:285px"><svg class="lig" width="24" height="16" viewBox="0 0 24 16"><path d="M1.4 6.3 H17.6 M1.4 10.1 H17.6 M15.4 3.6 L20.4 8.2 L15.4 12.8" fill="none" stroke="#e6e6ea" stroke-width="1.15"/></svg> DIRECTORY: http://10.10.10.152/weblog/</div>
 <div class="tl mono" style="top:317px"><span class="dash4"></span> Entering directory: http://10.10.10.152/css/ <span class="dash4"></span></div>
 <div class="tl mono" style="top:349px"><span class="dash4"></span> Entering directory: http://10.10.10.152/javascript/ <span class="dash4"></span></div>
 <div class="tl mono" style="top:365px"><svg class="lig" width="24" height="16" viewBox="0 0 24 16"><path d="M1.4 6.3 H17.6 M1.4 10.1 H17.6 M15.4 3.6 L20.4 8.2 L15.4 12.8" fill="none" stroke="#e6e6ea" stroke-width="1.15"/></svg> DIRECTORY: http://10.10.10.152/javascript/jquery/</div>
 <div class="tl mono" style="top:397px"><span class="dash4"></span> Entering directory: http://10.10.10.152/js/ <span class="dash4"></span></div>
 <div class="tl mono" style="top:429px"><span class="dash4"></span> Entering directory: http://10.10.10.152/php/ <span class="dash4"></span></div>
 <div class="tl mono" style="top:445px">+ http://10.10.10.152/php/info.php (CODE:200|SIZE:0)</div>
 <div class="tl mono" style="top:461px"><svg class="lig" width="24" height="16" viewBox="0 0 24 16"><path d="M1.4 6.3 H17.6 M1.4 10.1 H17.6 M15.4 3.6 L20.4 8.2 L15.4 12.8" fill="none" stroke="#e6e6ea" stroke-width="1.15"/></svg> DIRECTORY: http://10.10.10.152/php/phpmyadmin/</div>
 <div class="tl mono" style="top:493px"><span class="dash2"></span>-- Entering directory: http://10.10.10.152/temporary/ <span class="dash4"></span></div>
 <div class="tl mono" style="top:509px">+ http://10.10.10.152/temporary/index.html (CODE:200|SIZE:12)</div>
 <div class="abs" style="left:0;top:545px;width:759px;height:3px;background:#252530"></div>
 <div class="abs" style="left:9px;top:546px;width:750px;height:1.6px;background:#15161c"></div>
 <div class="abs" style="left:0;top:548px;width:759px;height:511px;background:#252530"></div>
 <svg class="abs" style="left:12.5px;top:555.8px" width="17" height="15" viewBox="0 0 17 15"><rect x="1" y="1" width="15" height="13" rx="1.6" fill="#181920" stroke="#8f919b" stroke-width="1"/><text x="3.2" y="6.2" font-size="5" font-weight="bold" fill="#8f919b" font-family="Liberation Mono, monospace">$_</text></svg>
 <div class="abs nw" style="left:283px;top:554px;width:200px;text-align:center;font-size:11.6px;font-weight:bold;line-height:16px;color:#83858f">root@xbei: /data/demo</div>
 <div class="abs" style="left:733px;top:554px;width:18px;height:18px;border-radius:9px;background:#1b1b23;filter:blur(1.5px)"></div>
 <div class="menu" style="left:17px;top:579px">文件</div>
 <div class="menu" style="left:61px;top:579px">动作</div>
 <div class="menu" style="left:105px;top:579px">编辑</div>
 <div class="menu" style="left:149px;top:579px">查看</div>
 <div class="menu" style="left:193px;top:579px">帮助</div>
 <div class="tl mono" style="top:608px">        ,~~~~~~,       |    Stink      |</div>
 <div class="tl mono" style="top:624px">       / ,      \      &#x27;,  ________ _,&quot;</div>
 <div class="tl mono" style="top:640px">      /,~|_______\.      V</div>
 <div class="tl mono" style="top:656px">     /~ (__________)</div>
 <div class="tl mono" style="top:672px">    (*)  ; (^)(^)&#x27;:</div>
 <div class="tl mono" style="top:688px">        =;  ____  ;</div>
 <div class="tl mono" style="top:704px">          ; &quot;&quot;&quot;&quot;  ;=</div>
 <div class="tl mono" style="top:720px">   {&quot;}_   &#x27; &#x27;&quot;&quot;&#x27; &#x27; _{&quot;}</div>
 <div class="tl mono" style="top:736px">   \__/     &gt;  &lt;   \__/</div>
 <div class="tl mono" style="top:752px">      \    ,&quot;   &quot;,  /</div>
 <div class="tl mono" style="top:768px">       \  &quot;       /&quot;</div>
 <div class="tl mono" style="top:784px">          &quot;      &quot;=</div>
 <div class="tl mono" style="top:800px">           &gt;     &lt;</div>
 <div class="tl mono" style="top:816px">          =&quot;     &quot;-</div>
 <div class="tl mono" style="top:832px">          -`.   ,&#x27;</div>
 <div class="tl mono" style="top:848px">                -</div>
 <div class="tl mono" style="top:864px">            `--&#x27;</div>
 <div class="tl mono" style="top:896px">stinky@10.10.10.152: Permission denied (publickey).</div>
 <div class="tl mono" style="top:928px"><span style="color:#2873d6">┌──(</span><span style="color:#e8141f;font-weight:bold">root<span class="kk">㉿</span>xbei</span><span style="color:#2873d6">)-[</span><span style="color:#f4f4f7;font-weight:bold">/data/demo</span><span style="color:#2873d6">]</span></div>
 <div class="tl mono" style="top:944px"><span style="color:#2873d6">└─</span><span style="color:#e8141f;font-weight:bold">#</span> </div>
 <div class="abs" style="left:44px;top:943.5px;width:8.4px;height:15px;border:1px solid #f0f0f4"></div>
 <div class="abs" style="left:15.75px;top:941.5px;width:1.15px;height:5px;background:#2873d6"></div>
 <div class="abs nw" style="left:583px;top:527px;font-family:'Noto Sans CJK SC',sans-serif;font-weight:400;font-size:18.6px;line-height:24px;color:#189fdb;letter-spacing:-0.55px">公众号【泷羽Sec】</div>
 <div class="abs" style="left:716.6px;top:980px;width:60px;height:40px;border-radius:20px;background:#c9cad1"></div>
 <svg class="abs" style="left:721px;top:983px" width="36" height="36" viewBox="0 0 36 36"><defs><linearGradient id="sw" x1="0.2" y1="0" x2="0.9" y2="1"><stop offset="0" stop-color="#1c8ed0"/><stop offset="0.5" stop-color="#1fa0ac"/><stop offset="1" stop-color="#2a9d5a"/></linearGradient></defs><circle cx="17.4" cy="17.4" r="15.6" fill="#a3c9c4"/><path d="M22 2.6 Q31 6 32.8 15 Q34 24 27 30 Q20 35 12 31.6 Q8 29 8.6 24 Q9.6 19.4 15 18.4 Q21 17.6 23.6 13 Q25.4 8 22 2.6Z" fill="url(#sw)"/><path d="M9.6 23.6 Q10 19.6 15 18.6 Q20 18 22.4 15.4 Q27 21 24 27.6 Q19 33.6 11.6 30.8 Q8.6 28.4 9.6 23.6Z" fill="#2f9e4f"/><path d="M4.6 12 Q5.6 7.6 8.6 7.6 Q9.8 9.6 7.6 13.6 Q5.6 19 7.6 26 Q3 20 4.6 12Z" fill="#2fa46a"/><path d="M14 17 Q20 15.4 23 11.6" stroke="#e9c9c4" stroke-width="1.2" fill="none" opacity="0.8"/></svg>
 <div class="abs" style="left:0;top:1058px;width:759px;height:21px;background:#2a292c"></div>
 <div class="abs" style="left:0;top:1057.3px;width:759px;height:1.2px;background:#515054"></div>
 <div class="abs nw" style="left:2px;top:1061px;font-family:'Noto Sans CJK SC','Liberation Sans',sans-serif;font-size:12px;line-height:17px;color:#f0f0f3">要将输入定向到该虚拟机，请将鼠标指针移入其中或按 Ctrl+G。</div>
 <svg class="abs" style="left:622px;top:1059px" width="137" height="20" viewBox="1780 1059 137 20"><g fill="none" stroke="#8a898e" stroke-width="1.2"><path d="M1786.2 1071 L1787.6 1064.4 H1797.4 L1798.8 1071 M1784.8 1071 H1799.4 V1076.4 H1784.8Z"/><circle cx="1813" cy="1070.4" r="6.6"/><path d="M1828 1063.6 H1836 V1068.6 H1828Z M1832.6 1068.6 H1840.6 V1073.6 H1832.6Z"/><path d="M1828 1070 V1076.6 H1836" stroke-dasharray="1 1.2"/><path d="M1849.6 1068 H1852.2 L1855.6 1064.6 V1076.4 L1852.2 1073 H1849.6Z M1858.4 1068 V1071.6 H1861"/><path d="M1880.6 1063.2 H1893.6 V1072.6 L1889.6 1076.8 H1880.6Z M1889.6 1076.8 V1072.6 H1893.6"/></g><circle cx="1813" cy="1070.4" r="1.6" fill="#8a898e"/><circle cx="1796.6" cy="1074.6" r="2.5" fill="#74cf2a"/><circle cx="1817.4" cy="1074.6" r="2.5" fill="#74cf2a"/><circle cx="1838.6" cy="1074.6" r="2.5" fill="#74cf2a"/><circle cx="1859.4" cy="1074.6" r="2.5" fill="#74cf2a"/><rect x="1870.4" y="1062" width="2" height="16" fill="#f0f0f3"/><path d="M1905 1079 L1916 1068 M1909 1079 L1916 1072 M1913 1079 L1916 1076" stroke="#6a696f" stroke-width="1"/></svg>
 <div class="abs" style="left:758px;top:0;width:1px;height:1079px;background:#4e4d52"></div>
 <div class="abs" style="left:0;top:0;width:2px;height:1079px;background:linear-gradient(90deg,#16346f 0,#16346f 0.3px,#5c5b5f 0.3px,#5c5b5f 1.9px,transparent 1.9px)"></div>
 <!--VM2_END-->
</div>
<!--ANNOT-->
<svg class="abs" style="left:0;top:0;pointer-events:none" width="1917" height="1079" viewBox="0 0 1917 1079">
 <!-- red rectangle -->
 <rect x="1261" y="245.2" width="279.5" height="56.6" rx="3.5" fill="none" stroke="#f0303a" stroke-width="3.8"/>
 <!-- tapered line A -->
 <path d="M301.5 72.6 L305 71.9 L700 149.7 L1100 228.7 L1158 240.2 L1158 241 L1100 229.7 L700 151.8 L306 75.2 Z" fill="#f0405a"/>
 <path d="M1158 240.2 L1222 253 L1222 253.3 L1158 241 Z" fill="#f0405a" opacity="0.5"/>
 <!-- tapered line B -->
 <path d="M306.4 111.6 L306.8 111.8 L270 215 L224.4 343.6 L222.6 344.4 L221.8 343 L268.4 214.4 Z" fill="#f0385a"/>
</svg>
<!--ANNOT_END-->
</body>
</html>
